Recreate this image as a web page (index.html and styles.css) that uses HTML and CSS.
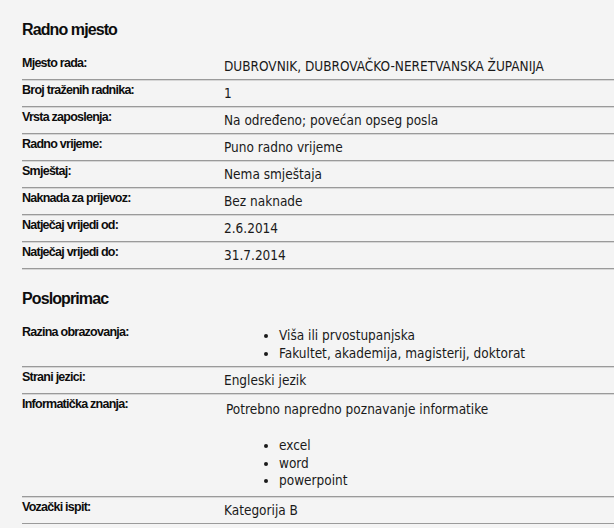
FILE: index.html
```html
<!DOCTYPE html>
<html lang="hr">
<head>
<meta charset="utf-8">
<title>Radno mjesto</title>
<link rel="stylesheet" href="styles.css">
</head>
<body>
<div class="page">
  <section class="section">
    <h2 class="section-title">Radno mjesto</h2>
    <div class="row"><div class="label">Mjesto rada:</div><div class="value">DUBROVNIK, DUBROVAČKO-NERETVANSKA ŽUPANIJA</div></div>
    <div class="row"><div class="label">Broj traženih radnika:</div><div class="value">1</div></div>
    <div class="row"><div class="label">Vrsta zaposlenja:</div><div class="value">Na određeno; povećan opseg posla</div></div>
    <div class="row"><div class="label">Radno vrijeme:</div><div class="value">Puno radno vrijeme</div></div>
    <div class="row"><div class="label">Smještaj:</div><div class="value">Nema smještaja</div></div>
    <div class="row"><div class="label">Naknada za prijevoz:</div><div class="value">Bez naknade</div></div>
    <div class="row"><div class="label">Natječaj vrijedi od:</div><div class="value">2.6.2014</div></div>
    <div class="row"><div class="label">Natječaj vrijedi do:</div><div class="value">31.7.2014</div></div>
  </section>
  <section class="section">
    <h2 class="section-title">Posloprimac</h2>
    <div class="row"><div class="label">Razina obrazovanja:</div><div class="value"><ul class="list"><li>Viša ili prvostupanjska</li><li>Fakultet, akademija, magisterij, doktorat</li></ul></div></div>
    <div class="row"><div class="label">Strani jezici:</div><div class="value">Engleski jezik</div></div>
    <div class="row"><div class="label">Informatička znanja:</div><div class="value"><p class="note">Potrebno napredno poznavanje informatike</p><ul class="list list-it"><li>excel</li><li>word</li><li>powerpoint</li></ul></div></div>
    <div class="row"><div class="label">Vozački ispit:</div><div class="value">Kategorija B</div></div>
  </section>
</div>
</body>
</html>
```

FILE: styles.css
```css
html, body {
  margin: 0;
  padding: 0;
  background: #f4f4f4;
}
body {
  font-family: "DejaVu Sans Condensed", "Liberation Sans", Arial, sans-serif;
  color: #111;
}
.page {
  padding-left: 22px;
}
.section-title {
  margin: 0;
  padding: 20px 0 13px;
  font-family: "Liberation Sans", Arial, sans-serif;
  font-size: 16px;
  line-height: 20px;
  font-weight: bold;
  letter-spacing: -0.9px;
  color: #0d0d0d;
}
.row {
  display: flex;
  border-bottom: 1px solid #9a9a9a;
  box-shadow: 0 1px 0 #d6d6d6;
}
.label {
  width: 202px;
  flex: none;
  padding-top: 1px;
  font-family: "Liberation Sans", Arial, sans-serif;
  font-size: 12.5px;
  line-height: 18px;
  font-weight: bold;
  letter-spacing: -0.75px;
  color: #0d0d0d;
}
.value {
  flex: 1;
  padding: 4px 0 4px;
  font-size: 13.5px;
  line-height: 18px;
  color: #1a1a1a;
}
.list {
  margin: 0;
  padding-left: 55px;
}
.note {
  margin: 0 0 19px 2px;
  padding-top: 2px;
}
.list-it {
  line-height: 17.5px;
  padding-bottom: 2px;
}
```
